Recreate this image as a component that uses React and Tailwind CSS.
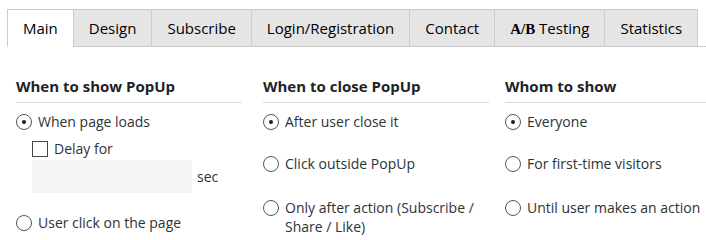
import { useState } from 'react';

const TABS = ['Main', 'Design', 'Subscribe', 'Login/Registration', 'Contact', 'A/B Testing', 'Statistics'];

const Option = ({ checked, className = '', children }) => (
  <div className={`flex items-start leading-[19px] ${className}`}>
    <span className="mr-[6px] mt-[2px] flex h-4 w-4 shrink-0 items-center justify-center rounded-full border border-[#555] bg-white">
      {checked ? <span className="h-1 w-1 rounded-full bg-[#1e1e1e]" /> : null}
    </span>
    <span>{children}</span>
  </div>
);

const Heading = ({ children }) => (
  <h3 className="border-b border-[#dcdcde] pb-[6px] text-[15px] font-bold leading-5 text-[#1d2327]">{children}</h3>
);

export default function App() {
  const [tab, setTab] = useState('Main');

  return (
    <div className="h-[239px] overflow-hidden bg-white font-['Open_Sans',sans-serif] text-[14px] text-[#2c3338]">
      <div className="flex pl-[7px] pt-[9px]">
        {TABS.map((name) => {
          const active = tab === name;
          return (
            <button
              key={name}
              type="button"
              onClick={() => setTab(name)}
              className={`-ml-px h-[38px] border border-[#ccc] px-[15px] text-[15px] leading-9 text-black first:ml-0 ${active ? 'border-b-white bg-white' : 'bg-[#e5e5e5]'}`}
            >
              {name === 'A/B Testing' ? (
                <>
                  <span className="font-['Liberation_Serif',serif] font-bold">A/B</span> Testing
                </>
              ) : (
                name
              )}
            </button>
          );
        })}
      </div>
      <div className="-mt-px ml-[72px] border-t border-[#ccc]" />

      <div className="flex gap-[21px] pl-4 pt-[29px]">
        <div className="w-[226px] shrink-0">
          <Heading>When to show PopUp</Heading>
          <Option checked className="mt-[9px]">When page loads</Option>
          <div className="mt-[8px] flex items-start pl-4 leading-[19px]">
            <span className="mr-[6px] mt-[2px] h-4 w-4 shrink-0 border border-[#444] bg-white" />
            <span>Delay for</span>
          </div>
          <div className="mt-[2px] flex items-center pl-4">
            <div className="h-[33px] w-[160px] bg-[#f4f4f4]" />
            <span className="ml-[5px]">sec</span>
          </div>
          <Option className="mt-[20px]">User click on the page</Option>
        </div>

        <div className="w-[226px] shrink-0">
          <Heading>When to close PopUp</Heading>
          <Option checked className="mt-[9px]">After user close it</Option>
          <Option className="mt-[23px]">Click outside PopUp</Option>
          <Option className="mt-[25px]">Only after action (Subscribe / Share / Like)</Option>
        </div>

        <div className="-ml-[5px] w-[226px] shrink-0">
          <Heading>Whom to show</Heading>
          <Option checked className="mt-[9px]">Everyone</Option>
          <Option className="mt-[23px]">For first-time visitors</Option>
          <Option className="mt-[25px] whitespace-nowrap">Until user makes an action</Option>
        </div>
      </div>
    </div>
  );
}
